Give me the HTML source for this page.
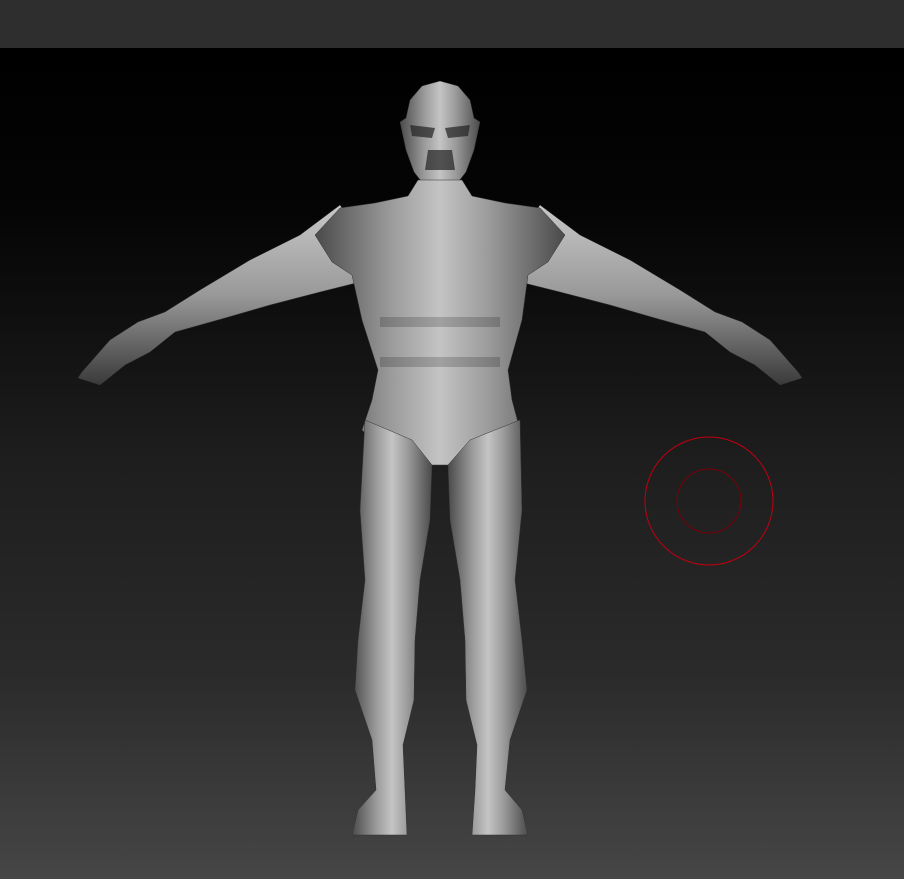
<!DOCTYPE html>
<html><head><style>
html,body{margin:0;padding:0;width:904px;height:879px;overflow:hidden;background:#000}
.top{position:absolute;left:0;top:0;width:904px;height:48px;background:#2e2e2e}
.vp{position:absolute;left:0;top:48px;width:904px;height:831px;background:linear-gradient(#000 0%,#050505 20%,#1e1e1e 50%,#2a2a2a 75%,#464646 100%)}
svg{position:absolute;left:0;top:0}
</style></head><body>
<div class="top"></div>
<div class="vp"></div>
<svg width="904" height="879" viewBox="0 0 904 879">
<defs>
<linearGradient id="g" x1="0" y1="0" x2="1" y2="0">
<stop offset="0" stop-color="#4a4a4a"/><stop offset="0.3" stop-color="#9a9a9a"/><stop offset="0.5" stop-color="#c4c4c4"/><stop offset="0.7" stop-color="#9a9a9a"/><stop offset="1" stop-color="#4a4a4a"/>
</linearGradient>
<linearGradient id="a" x1="0" y1="0" x2="0" y2="1">
<stop offset="0" stop-color="#c8c8c8"/><stop offset="0.5" stop-color="#999"/><stop offset="1" stop-color="#3a3a3a"/>
</linearGradient>
</defs>
<g stroke="#333" stroke-width="0.5">
<!-- left arm -->
<path fill="url(#a)" d="M340 205 L300 235 L250 260 L200 290 L165 312 L138 322 L110 340 L82 372 L78 378 L100 385 L125 365 L150 352 L175 332 L225 318 L270 305 L320 292 L360 282 L355 225 Z"/>
<!-- right arm -->
<path fill="url(#a)" d="M540 205 L580 235 L630 260 L680 290 L715 312 L742 322 L770 340 L798 372 L802 378 L780 385 L755 365 L730 352 L705 332 L655 318 L610 305 L560 292 L520 282 L525 225 Z"/>
</g>
<g fill="url(#g)" stroke="#333" stroke-width="0.5">
<!-- head -->
<path d="M440 81 L458 86 L470 100 L474 118 L480 122 L474 150 L466 172 L455 186 L425 186 L414 172 L406 150 L400 122 L406 118 L410 100 L422 86 Z"/>
<!-- torso -->
<path d="M418 180 L462 180 L472 196 L505 203 L540 208 L565 235 L548 262 L528 275 L522 320 L508 370 L512 400 L520 430 L508 440 L470 455 L460 465 L420 465 L410 455 L372 440 L362 430 L372 400 L378 370 L362 320 L352 275 L332 262 L315 235 L340 208 L375 203 L408 196 Z"/>
<!-- left leg -->
<path d="M365 420 L412 440 L432 465 L430 520 L420 580 L415 640 L414 700 L403 745 L405 790 L407 835 L352 835 L358 810 L376 790 L372 740 L355 690 L358 640 L365 580 L360 510 Z"/>
<!-- right leg -->
<path d="M520 420 L470 440 L448 465 L450 520 L460 580 L465 640 L466 700 L477 745 L475 790 L472 835 L528 835 L522 810 L505 790 L510 740 L527 690 L522 640 L515 580 L522 510 Z"/>
</g>
<g fill="#222" opacity="0.7">
<path d="M410 125 L435 128 L432 138 L412 136 Z"/><path d="M470 125 L445 128 L448 138 L468 136 Z"/>
<path d="M428 150 L452 150 L455 170 L425 170 Z"/>
</g>
<g fill="none" stroke="#000" stroke-opacity="0.18" stroke-width="10">
<path d="M380 322 L500 322"/><path d="M380 362 L500 362"/>
</g>
<circle cx="709" cy="501" r="64" fill="none" stroke="#c00010" stroke-width="1"/>
<circle cx="709" cy="501" r="32" fill="none" stroke="#7a0008" stroke-width="1"/>
</svg>
</body></html>
